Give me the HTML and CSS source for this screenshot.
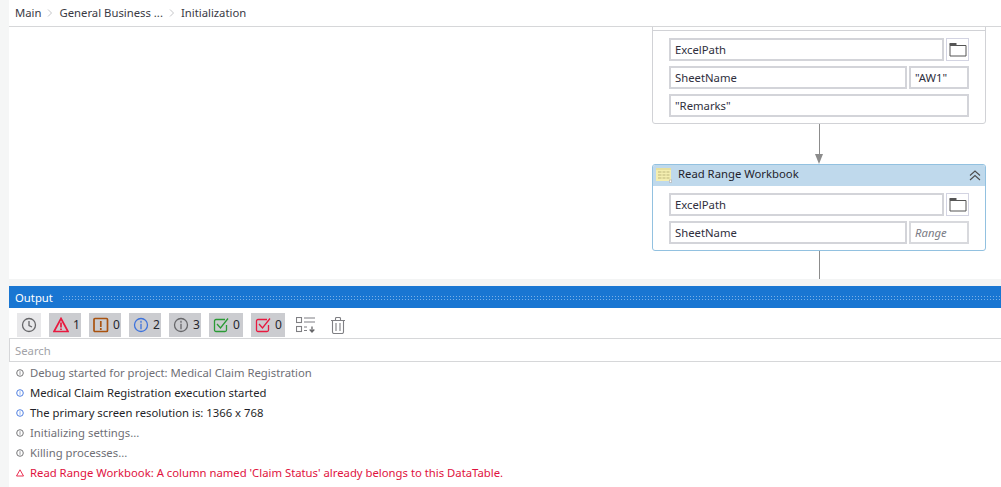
FILE: index.html
```html
<!DOCTYPE html>
<html lang="en">
<head>
<meta charset="utf-8">
<title>Initialization</title>
<link rel="stylesheet" href="styles.css">
</head>
<body>
<div class="app">
  <div class="strip"></div>
  <main class="main">
    <nav class="crumbs">
      <span>Main</span>
      <svg class="chev" viewBox="0 0 6 8"><path d="M1 0.5 4.5 4 1 7.5"/></svg>
      <span>General Business ...</span>
      <svg class="chev" viewBox="0 0 6 8"><path d="M1 0.5 4.5 4 1 7.5"/></svg>
      <span>Initialization</span>
    </nav>
    <section class="canvas">
      <div class="card card-top">
        <div class="card-head-cut"></div>
        <div class="fields">
          <div class="row">
            <div class="field grow">ExcelPath</div>
            <button class="folder"><svg viewBox="0 0 18 15"><path class="folder-tab" d="M0.5 1h7v2h-7z"/><path class="folder-line" d="M1 2.5v11.5h16V3.5H1"/></svg></button>
          </div>
          <div class="row">
            <div class="field grow">SheetName</div>
            <div class="field small">"AW1"</div>
          </div>
          <div class="row">
            <div class="field grow">"Remarks"</div>
          </div>
        </div>
      </div>
      <div class="line line-1"></div>
      <div class="arrow"></div>
      <div class="card card-read">
        <header class="card-head">
          <svg class="table-icon" viewBox="0 0 16 15">
            <rect x="0" y="0" width="15" height="13" fill="#f4eeb0"/>
            <path d="M0 1h15" stroke="#d9d28e" fill="none"/>
            <path d="M2 4h3.500M6.500 4h3M10.500 4h3M2 7h3.500M6.500 7h3M10.500 7h3M2 10h3.500M6.500 10h3M10.500 10h3" stroke="#bdb67c" fill="none"/>
            <rect x="13.300" y="12" width="2.400" height="2.600" fill="#fff" stroke="#a9a9a9" stroke-width="0.600"/>
          </svg>
          <span class="card-title">Read Range Workbook</span>
          <svg class="collapse" viewBox="0 0 12 11"><path d="M1 5.500 6 1l5 4.500M1 10 6 5.500l5 4.500"/></svg>
        </header>
        <div class="fields">
          <div class="row">
            <div class="field grow">ExcelPath</div>
            <button class="folder"><svg viewBox="0 0 18 15"><path class="folder-tab" d="M0.5 1h7v2h-7z"/><path class="folder-line" d="M1 2.5v11.5h16V3.5H1"/></svg></button>
          </div>
          <div class="row">
            <div class="field grow">SheetName</div>
            <div class="field small hint">Range</div>
          </div>
        </div>
      </div>
      <div class="line line-2"></div>
    </section>
    <div class="split"></div>
    <section class="output">
      <header class="out-title"><span>Output</span><div class="dots"></div></header>
      <div class="toolbar">
        <button class="tool plain"><svg viewBox="0 0 16 16"><circle cx="8" cy="8" r="6.500" class="s-gray"/><path d="M8 4v4.500l3 1.500" class="s-gray"/></svg></button>
        <button class="tool wide"><svg viewBox="0 0 16 16"><path d="M8 1.500 15 14.500H1z" class="s-red thick"/><path d="M8 5.500v5M8 11.500v1.500" class="s-red thick"/></svg><span>1</span></button>
        <button class="tool wide"><svg viewBox="0 0 16 16"><rect x="1" y="1.500" width="13.500" height="13" rx="1" class="s-brown thick"/><path d="M7.800 4v6M7.800 11v2" class="s-brown thick"/></svg><span>0</span></button>
        <button class="tool wide"><svg viewBox="0 0 16 16"><circle cx="8" cy="8" r="6.500" class="s-blue"/><path d="M8 3.700v2M8 6.800v5.500" class="s-blue"/></svg><span>2</span></button>
        <button class="tool wide"><svg viewBox="0 0 16 16"><circle cx="8" cy="8" r="6.500" class="s-gray"/><path d="M8 3.700v2M8 6.800v5.500" class="s-gray"/></svg><span>3</span></button>
        <button class="tool wide check"><svg viewBox="0 0 16 16"><path d="M13.500 8v5a1.500 1.500 0 0 1-1.500 1.500H3A1.500 1.500 0 0 1 1.500 13V4A1.500 1.500 0 0 1 3 2.500h9" class="s-green"/><path d="M4 7l3.500 4L15 1.500" class="s-green"/></svg><span>0</span></button>
        <button class="tool wide check"><svg viewBox="0 0 16 16"><path d="M13.500 8v5a1.500 1.500 0 0 1-1.500 1.500H3A1.500 1.500 0 0 1 1.500 13V4A1.500 1.500 0 0 1 3 2.500h9" class="s-red"/><path d="M4 7l3.500 4L15 1.500" class="s-red"/></svg><span>0</span></button>
        <button class="tool bare list"><svg viewBox="0 0 20 16"><rect x="0.500" y="0.500" width="5" height="5" class="s-light"/><rect x="0.500" y="9.500" width="5" height="5" class="s-light"/><path d="M8 1h11M8 5h11M8 10h3M8 13.500h3" class="s-light"/><path d="M16 9.500v5M13.700 12.500l2.300 2.500 2.300-2.500" class="s-gray"/></svg></button>
        <button class="tool bare trash"><svg viewBox="0 0 14 17"><path d="M0 3.500h14M4.500 3.500V1.500q0-1 1-1h3q1 0 1 1v2M1.500 3.500V15q0 1.500 1.500 1.500h8q1.500 0 1.500-1.500V3.500M5 6v8M9 6v8" class="s-light"/></svg></button>
      </div>
      <div class="search">Search</div>
      <ul class="log">
        <li class="muted"><svg viewBox="0 0 8 8"><circle cx="4" cy="4" r="3.300" class="s-gray"/><path d="M4 2.200v3.600" class="s-faint"/></svg>Debug started for project: Medical Claim Registration</li>
        <li><svg viewBox="0 0 8 8"><circle cx="4" cy="4" r="3.300" class="s-blue"/><path d="M4 2.200v3.600" class="s-blue-faint"/></svg>Medical Claim Registration execution started</li>
        <li><svg viewBox="0 0 8 8"><circle cx="4" cy="4" r="3.300" class="s-blue"/><path d="M4 2.200v3.600" class="s-blue-faint"/></svg>The primary screen resolution is: 1366 x 768</li>
        <li class="muted"><svg viewBox="0 0 8 8"><circle cx="4" cy="4" r="3.300" class="s-gray"/><path d="M4 2.200v3.600" class="s-faint"/></svg>Initializing settings...</li>
        <li class="muted"><svg viewBox="0 0 8 8"><circle cx="4" cy="4" r="3.300" class="s-gray"/><path d="M4 2.200v3.600" class="s-faint"/></svg>Killing processes...</li>
        <li class="error"><svg viewBox="0 0 8 8"><path d="M4 .8 7.500 7H.5z" class="s-red"/></svg>Read Range Workbook: A column named 'Claim Status' already belongs to this DataTable.</li>
      </ul>
    </section>
  </main>
</div>
</body>
</html>
```
FILE: styles.css
```css
* { box-sizing: border-box; }
html, body { margin: 0; height: 100%; overflow: hidden; background: #fff; }
body { font: 11.3px/16px "Noto Sans", "Open Sans", sans-serif; color: #2b2b33; }
ul { list-style: none; margin: 0; padding: 0; }
button { padding: 0; margin: 0; border: 0; background: none; font: inherit; color: inherit; }
svg { display: block; fill: none; }

.app { display: flex; width: 1001px; height: 487px; }
.strip { width: 9px; flex: none; background: #f5f6f6; }
.main { flex: 1; display: flex; flex-direction: column; min-width: 0; }

.crumbs { height: 27px; flex: none; display: flex; align-items: center; padding-left: 6px; border-bottom: 1px solid #d6d7d9; color: #3a3a44; }
.chev { width: 6px; height: 8px; margin: 0 6px; }
.chev path { stroke: #c4c5c8; stroke-width: 1; }

.canvas { position: relative; height: 252px; flex: none; overflow: hidden; background: #fff; }
.card { position: absolute; left: 643px; width: 334px; background: #fff; border: 1px solid #d1d2d6; border-radius: 3px; }
.card-top { top: -4px; height: 101px; }
.card-head-cut { height: 7px; border-bottom: 1px solid #d1d2d6; margin-bottom: 7px; }
.card-read { top: 137px; height: 87px; border-color: #92c1e0; }
.card-head { height: 21px; display: flex; align-items: center; background: #bfd9ec; padding-left: 3px; margin-bottom: 7px; border-radius: 2px 2px 0 0; }
.table-icon { width: 16px; height: 15px; flex: none; }
.card-title { margin: -3px 0 0 6px; flex: 1; color: #1f1f2c; }
.collapse { width: 12px; height: 11px; margin-right: 4px; }
.collapse path { stroke: #4d4d4d; stroke-width: 1.100; }

.fields { display: flex; flex-direction: column; gap: 5px; padding: 0 16px; }
.row { display: flex; gap: 2px; }
.field { height: 23px; border: 2px solid #d3d4d9; background: #fff; padding: 0 4px; line-height: 19px; color: #2f2f3d; }
.grow { flex: 1; }
.small { width: 60px; flex: none; }
.hint { border-color: #d8d9dd; color: #7b7b85; font-style: italic; }
.folder { width: 23px; height: 23px; flex: none; display: flex; align-items: center; justify-content: center; border: 1px solid #d3d4e2; }
.folder svg { width: 18px; height: 15px; }
.folder-tab { fill: #555; }
.folder-line { stroke: #555; stroke-width: 1; }

.line { position: absolute; left: 810px; width: 1px; background: #8c8c8c; }
.line-1 { top: 97px; height: 32px; }
.line-2 { top: 224px; height: 28px; }
.arrow { position: absolute; left: 806px; top: 127px; width: 0; height: 0; border-style: solid; border-color: #8c8c8c transparent transparent; border-width: 10px 4.500px 0; }

.split { height: 7px; flex: none; background: #f3f4f4; }

.output { flex: 1; display: flex; flex-direction: column; min-height: 0; }
.out-title { height: 22px; flex: none; display: flex; align-items: center; gap: 9px; padding: 1px 0 0 6px; background: #1976d2; color: #fff; }
.dots { flex: 1; height: 6px; background-image: radial-gradient(circle, #7db1e6 0.6px, transparent 0.8px); background-size: 3px 3px; }

.toolbar { height: 30px; flex: none; display: flex; align-items: flex-start; gap: 8px; padding: 5px 0 0 8px; }
.tool { height: 24px; display: flex; align-items: center; color: #26262e; font-size: 12px; }
.tool svg { width: 16px; height: 16px; flex: none; }
.tool span { margin-left: 4px; }
.plain { width: 24px; justify-content: center; background: #e8e8ea; }
.wide { width: 32px; padding-left: 4px; background: #cbccd0; }
.check { width: 34px; }
.list { margin-left: 3px; }
.tool.list svg { width: 20px; height: 16px; }
.trash { margin-left: 7px; }
.tool.trash svg { width: 14px; height: 17px; }
.s-gray, .s-light, .s-red, .s-brown, .s-blue, .s-green, .s-faint, .s-blue-faint { stroke-width: 1.300; fill: none; }
.s-gray { stroke: #666669; }
.s-light { stroke: #7f7f83; stroke-width: 1.100; }
.s-red { stroke: #e8193f; }
.s-brown { stroke: #a9520f; }
.s-blue { stroke: #3d72dc; }
.s-green { stroke: #2a9a35; }
.thick { stroke-width: 1.700; }
.s-faint { stroke: #9a9a9e; stroke-width: 1; }
.s-blue-faint { stroke: #93b0ea; stroke-width: 1; }

.search { height: 24px; flex: none; border-top: 1px solid #d6d7d9; border-bottom: 1px solid #d6d7d9; border-left: 1px solid #d6d7d9; padding-left: 5px; line-height: 24px; color: #a2a3a8; }
.log { flex: 1; padding-top: 1px; }
.log li { height: 20px; display: flex; align-items: center; padding-left: 7px; color: #1f1f28; white-space: nowrap; }
.log li svg { width: 8px; height: 8px; margin-right: 6px; flex: none; }
.log li svg .s-gray, .log li svg .s-blue, .log li svg .s-red { stroke-width: 0.900; }
.log .muted { color: #6f6f76; }
.log .error { color: #e0123e; }
```
